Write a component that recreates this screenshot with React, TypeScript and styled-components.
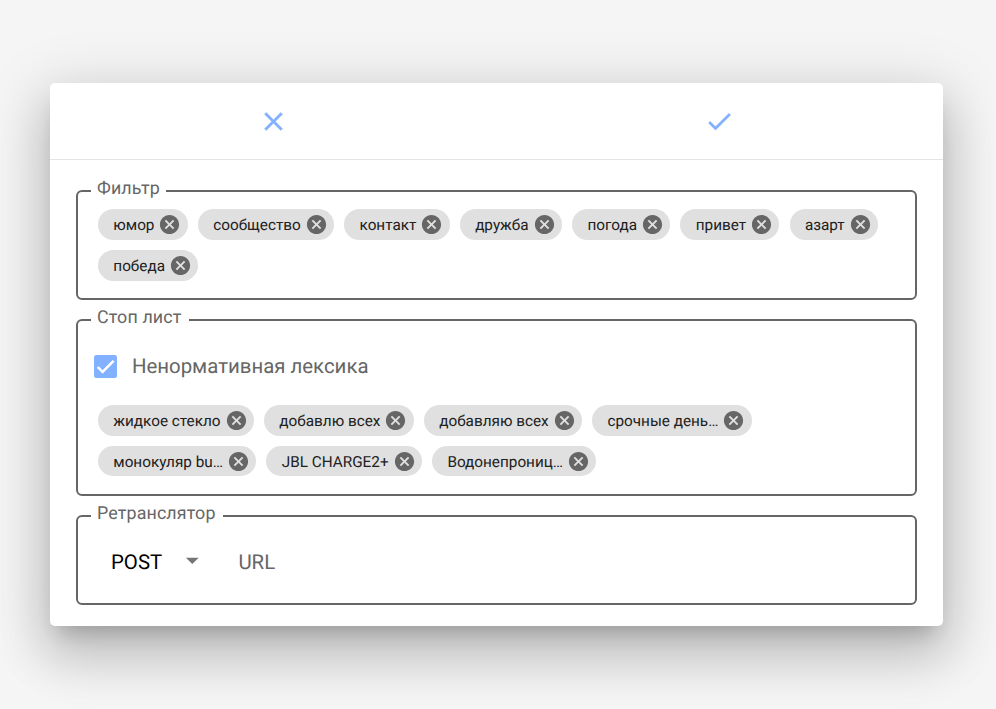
import React from "react";
import styled, { createGlobalStyle } from "styled-components";

const GlobalStyle = createGlobalStyle`
  body {
    margin: 0;
    background: #f5f5f5;
    font-family: Roboto, "Noto Sans", sans-serif;
    text-rendering: geometricPrecision;
  }
`;

const Page = styled.main`
  box-sizing: border-box;
  height: 709px;
  padding: 83px 53px 0 50px;
  overflow: hidden;
`;

const Card = styled.section`
  box-sizing: border-box;
  height: 543px;
  background: #fff;
  border-radius: 5px;
  box-shadow: 0 14px 19px -9px rgba(0, 0, 0, 0.2), 0 30.6px 48.5px 3.8px rgba(0, 0, 0, 0.14),
    0 11.5px 58.7px 10.2px rgba(0, 0, 0, 0.12);
`;

const Actions = styled.header`
  display: grid;
  grid-template-columns: 1fr 1fr;
  height: 76px;
  border-bottom: 1px solid #e4e4e4;
`;

const ActionButton = styled.button`
  display: flex;
  align-items: center;
  justify-content: center;
  padding: 0;
  border: 0;
  background: none;
  color: #82b1ff;
`;

const Icon = styled.svg<{ $size: number }>`
  display: block;
  flex: none;
  width: ${(p) => p.$size}px;
  height: ${(p) => p.$size}px;
  fill: currentColor;
`;

const Form = styled.form`
  display: flex;
  flex-direction: column;
  gap: 7px;
  padding: 18px 26px 0;
`;

const Group = styled.fieldset<{ $height: number }>`
  box-sizing: border-box;
  height: ${(p) => p.$height}px;
  margin: 0;
  padding: 0;
  border: 2px solid #666;
  border-radius: 6px;
`;

const Legend = styled.legend<{ $width: number }>`
  box-sizing: border-box;
  width: ${(p) => p.$width}px;
  height: 26px;
  margin-left: 13px;
  padding: 0 0 5px 6px;
  font-size: 17.85px;
  line-height: 21px;
  letter-spacing: 0.13px;
  white-space: nowrap;
  color: #666;
`;

const Chips = styled.div<{ $top: number }>`
  display: flex;
  flex-wrap: wrap;
  gap: 10.2px;
  padding: ${(p) => p.$top}px 20px 0;
`;

const Chip = styled.div`
  display: flex;
  align-items: center;
  box-sizing: border-box;
  height: 30.6px;
  padding: 0 6.3px 0 15.3px;
  gap: 4px;
  border-radius: 16px;
  background: #e0e0e0;
  color: #212121;
  font-size: 15.3px;
  line-height: 20px;
  white-space: nowrap;

  span {
    padding-top: 1px;
  }

  svg {
    color: #666;
  }
`;

const CheckRow = styled.label`
  display: flex;
  align-items: center;
  gap: 14.6px;
  padding: 21.4px 0 0.6px 16.3px;
  height: 24px;
  font-size: 20.4px;
  color: #666;
`;

const CheckBox = styled.span`
  display: flex;
  align-items: center;
  justify-content: center;
  width: 23px;
  height: 23px;
  border-radius: 2.5px;
  background: #82b1ff;
  color: #fff;
`;

const RelayRow = styled.div`
  display: flex;
  align-items: center;
  height: 24px;
  padding: 21px 0 0 33px;
  font-size: 20.4px;
`;

const Method = styled.span`
  width: 66px;
  color: #000;
`;

const Arrow = styled.span`
  padding-bottom: 3px;
  color: #757575;
`;

const UrlField = styled.span`
  margin-left: 30.8px;
  color: #666;
`;

const CLOSE = "M19 6.41L17.59 5 12 10.59 6.41 5 5 6.41 10.59 12 5 17.59 6.41 19 12 13.41 17.59 19 19 17.59 13.41 12z";
const CHECK = "M9 16.17L4.83 12l-1.42 1.41L9 19 21 7l-1.41-1.41z";
const CANCEL =
  "M12 2C6.47 2 2 6.47 2 12s4.47 10 10 10 10-4.47 10-10S17.53 2 12 2zm5 13.59L15.59 17 12 13.41 8.41 17 7 15.59 10.59 12 7 8.41 8.41 7 12 10.59 15.59 7 17 8.41 13.41 12 17 15.59z";
const ARROW = "M7 10l5 5 5-5z";

const Glyph = ({ d, size, weight = 0 }: { d: string; size: number; weight?: number }) => (
  <Icon viewBox="0 0 24 24" $size={size} aria-hidden="true" stroke="currentColor" strokeWidth={weight}>
    <path d={d} />
  </Icon>
);

const filterWords = ["юмор", "сообщество", "контакт", "дружба", "погода", "привет", "азарт", "победа"];
const stopWords = [
  "жидкое стекло",
  "добавлю всех",
  "добавляю всех",
  "срочные день…",
  "монокуляр bu…",
  "JBL CHARGE2+",
  "Водонепрониц…",
];

const ChipList = ({ words, top }: { words: string[]; top: number }) => (
  <Chips $top={top}>
    {words.map((word) => (
      <Chip key={word}>
        <span>{word}</span>
        <Glyph d={CANCEL} size={23} />
      </Chip>
    ))}
  </Chips>
);

export default function App() {
  return (
    <Page>
      <GlobalStyle />
      <Card>
        <Actions>
          <ActionButton type="button" aria-label="Отмена">
            <Glyph d={CLOSE} size={31} weight={0.3} />
          </ActionButton>
          <ActionButton type="button" aria-label="Сохранить">
            <Glyph d={CHECK} size={30.6} weight={0.2} />
          </ActionButton>
        </Actions>
        <Form>
          <Group $height={122}>
            <Legend $width={75}>Фильтр</Legend>
            <ChipList words={filterWords} top={5.2} />
          </Group>
          <Group $height={189}>
            <Legend $width={97.5}>Стоп лист</Legend>
            <CheckRow>
              <CheckBox>
                <Glyph d={CHECK} size={23} weight={0.8} />
              </CheckBox>
              Ненормативная лексика
            </CheckRow>
            <ChipList words={stopWords} top={26} />
          </Group>
          <Group $height={102}>
            <Legend $width={131.5}>Ретранслятор</Legend>
            <RelayRow>
              <Method>POST</Method>
              <Arrow>
                <Glyph d={ARROW} size={30.6} />
              </Arrow>
              <UrlField>URL</UrlField>
            </RelayRow>
          </Group>
        </Form>
      </Card>
    </Page>
  );
}
